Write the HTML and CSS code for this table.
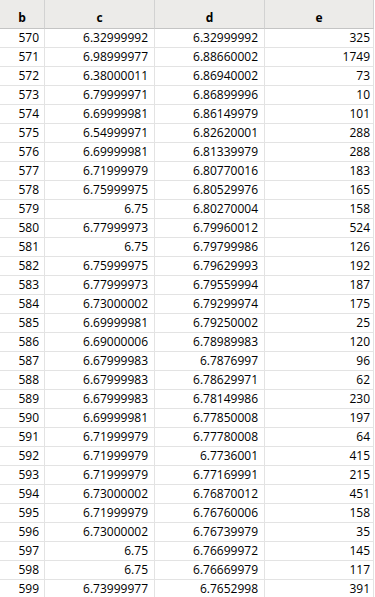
FILE: index.html
```html
<!DOCTYPE html>
<html>
<head>
<meta charset="utf-8">
<link rel="stylesheet" href="styles.css">
</head>
<body>
<div class="grid">
  <div class="hd">b</div><div class="hd">c</div><div class="hd">d</div><div class="hd">e</div>
  <div class="c b">570</div><div class="c">6.32999992</div><div class="c">6.32999992</div><div class="c e">325</div>
  <div class="c b">571</div><div class="c">6.98999977</div><div class="c">6.88660002</div><div class="c e">1749</div>
  <div class="c b">572</div><div class="c">6.38000011</div><div class="c">6.86940002</div><div class="c e">73</div>
  <div class="c b">573</div><div class="c">6.79999971</div><div class="c">6.86899996</div><div class="c e">10</div>
  <div class="c b">574</div><div class="c">6.69999981</div><div class="c">6.86149979</div><div class="c e">101</div>
  <div class="c b">575</div><div class="c">6.54999971</div><div class="c">6.82620001</div><div class="c e">288</div>
  <div class="c b">576</div><div class="c">6.69999981</div><div class="c">6.81339979</div><div class="c e">288</div>
  <div class="c b">577</div><div class="c">6.71999979</div><div class="c">6.80770016</div><div class="c e">183</div>
  <div class="c b">578</div><div class="c">6.75999975</div><div class="c">6.80529976</div><div class="c e">165</div>
  <div class="c b">579</div><div class="c">6.75</div><div class="c">6.80270004</div><div class="c e">158</div>
  <div class="c b">580</div><div class="c">6.77999973</div><div class="c">6.79960012</div><div class="c e">524</div>
  <div class="c b">581</div><div class="c">6.75</div><div class="c">6.79799986</div><div class="c e">126</div>
  <div class="c b">582</div><div class="c">6.75999975</div><div class="c">6.79629993</div><div class="c e">192</div>
  <div class="c b">583</div><div class="c">6.77999973</div><div class="c">6.79559994</div><div class="c e">187</div>
  <div class="c b">584</div><div class="c">6.73000002</div><div class="c">6.79299974</div><div class="c e">175</div>
  <div class="c b">585</div><div class="c">6.69999981</div><div class="c">6.79250002</div><div class="c e">25</div>
  <div class="c b">586</div><div class="c">6.69000006</div><div class="c">6.78989983</div><div class="c e">120</div>
  <div class="c b">587</div><div class="c">6.67999983</div><div class="c">6.7876997</div><div class="c e">96</div>
  <div class="c b">588</div><div class="c">6.67999983</div><div class="c">6.78629971</div><div class="c e">62</div>
  <div class="c b">589</div><div class="c">6.67999983</div><div class="c">6.78149986</div><div class="c e">230</div>
  <div class="c b">590</div><div class="c">6.69999981</div><div class="c">6.77850008</div><div class="c e">197</div>
  <div class="c b">591</div><div class="c">6.71999979</div><div class="c">6.77780008</div><div class="c e">64</div>
  <div class="c b">592</div><div class="c">6.71999979</div><div class="c">6.7736001</div><div class="c e">415</div>
  <div class="c b">593</div><div class="c">6.71999979</div><div class="c">6.77169991</div><div class="c e">215</div>
  <div class="c b">594</div><div class="c">6.73000002</div><div class="c">6.76870012</div><div class="c e">451</div>
  <div class="c b">595</div><div class="c">6.71999979</div><div class="c">6.76760006</div><div class="c e">158</div>
  <div class="c b">596</div><div class="c">6.73000002</div><div class="c">6.76739979</div><div class="c e">35</div>
  <div class="c b">597</div><div class="c">6.75</div><div class="c">6.76699972</div><div class="c e">145</div>
  <div class="c b">598</div><div class="c">6.75</div><div class="c">6.76669979</div><div class="c e">117</div>
  <div class="c b">599</div><div class="c">6.73999977</div><div class="c">6.7652998</div><div class="c e">391</div>
</div>
</body>
</html>
```
FILE: styles.css
```css
html, body {
  margin: 0;
  padding: 0;
  background: #ffffff;
}
body {
  font-family: "Open Sans", "Noto Sans", sans-serif;
  font-size: 12px;
  color: #000;
  overflow: hidden;
}
.grid {
  display: grid;
  grid-template-columns: 45px 110px 110px 109px;
  width: 374px;
}
.hd {
  height: 28px;
  box-sizing: border-box;
  padding-top: 6px;
  display: flex;
  align-items: center;
  justify-content: center;
  font-weight: 700;
  background: #ecebe9;
  border-right: 1px solid #d2d2d2;
  border-bottom: 1px solid #c4c4c4;
  height: 29px;
}
.c {
  height: 19px;
  box-sizing: border-box;
  line-height: 18px;
  text-align: right;
  padding-right: 6px;
  border-right: 1px solid #e3e3e3;
  border-bottom: 1px solid #e3e3e3;
  white-space: nowrap;
}
.c.b { padding-right: 5px; }
.c.e { padding-right: 3px; }
```
